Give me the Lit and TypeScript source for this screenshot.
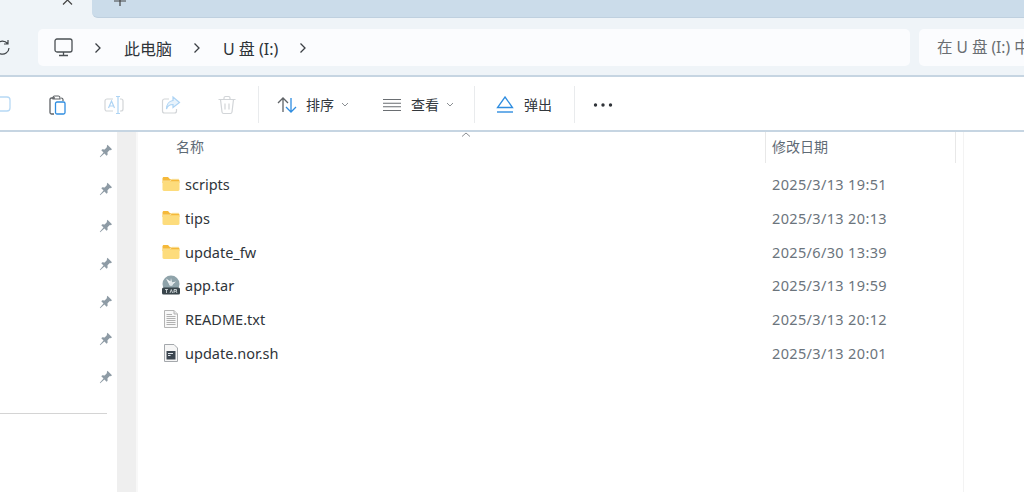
import { LitElement, html, css, svg } from "lit";
import { customElement } from "lit/decorators.js";

const folder = svg`<svg width="20" height="18" viewBox="0 0 20 18"><path d="M1.500 3.500C1.500 2.700 2.100 2 2.900 2H7l2 2.200h8c.8 0 1.400.6 1.400 1.400V8H1.500z" fill="#f5b93a"/><path d="M1.500 6.200h17v8.400c0 .8-.6 1.400-1.400 1.400H2.900C2.100 16 1.500 15.400 1.500 14.600z" fill="#fddc7c"/><path d="M1.500 6h7.500l2-1.800h7" fill="none" stroke="#fbeab0" stroke-width=".8"/></svg>`;
const tar = svg`<svg width="20" height="20" viewBox="0 0 20 20"><circle cx="10" cy="9" r="8.500" fill="#8fa3aa"/><path d="M5 3.500 9.500 6.500 10 3l1 4.500 4-1-4 3.500H8.500z" fill="#f4f7f8"/><circle cx="10" cy="9" r="2" fill="#dfe6e9"/><rect x="1" y="12.500" width="18" height="7" rx="1.500" fill="#39454b"/><path d="M4 14.500h3M5.500 14.500v3.500M9 18l1.300-3.500 1.300 3.500M13 18v-3.500h2.500v1.700H13M15 16.200l1 1.800" fill="none" stroke="#dfe6e9" stroke-width=".8"/></svg>`;
const txt = svg`<svg width="20" height="20" viewBox="0 0 20 20"><path d="M3.500 1.500h9.500l3.500 3.500v13.500h-13z" fill="#f8f8f8" stroke="#b4b4b4"/><path d="M13 1.500v3.500h3.500" fill="#e6e6e6" stroke="#b4b4b4"/><path d="M5.500 5.500h5.500M5.500 7.500h9M5.500 9.500h9M5.500 11.500h9M5.500 13.500h9M5.500 15.500h9" stroke="#b0b0b0"/></svg>`;
const sh = svg`<svg width="20" height="20" viewBox="0 0 20 20"><path d="M3.500 1.500h9.500l3.500 3.500v13.500h-13z" fill="#f6f6f6" stroke="#a4a8ac"/><rect x="5.500" y="8" width="9" height="8.500" fill="#3c4650"/><path d="M7 10.500h5M7 12.500h2.500" stroke="#dfe5ea"/></svg>`;
const pin = svg`<svg width="14" height="14" viewBox="0 0 14 14"><path d="M8.500.8 13 5.300l-1.200.9-1-.2-2.300 2.300.1 2.400-1 1-2.200-2.300L1.200 13.200.8 12.800l3.700-4.300L2.300 6.300l1-1 2.400.1L8 3.100l-.2-1z" fill="#8e9ba5"/></svg>`;
const chev = svg`<svg class="chev" width="8" height="12" viewBox="0 0 8 12"><path d="M1.500 1.500 6 6l-4.500 4.500" fill="none" stroke="#3a3f44" stroke-width="1.300"/></svg>`;
const caret = svg`<svg class="ic" width="8" height="5" viewBox="0 0 8 5"><path d="M1 1l3 3 3-3" fill="none" stroke="#8b8f93"/></svg>`;

const rows: [unknown, string, string][] = [
  [folder, "scripts", "2025/3/13 19:51"],
  [folder, "tips", "2025/3/13 20:13"],
  [folder, "update_fw", "2025/6/30 13:39"],
  [tar, "app.tar", "2025/3/13 19:59"],
  [txt, "README.txt", "2025/3/13 20:12"],
  [sh, "update.nor.sh", "2025/3/13 20:01"],
];

@customElement("app-root")
export class AppRoot extends LitElement {
  static styles = css`
    :host { display: block; width: 1024px; height: 492px; overflow: hidden; background: #fff;
      font-family: "Noto Sans", "Noto Sans CJK SC", sans-serif; color: #30363c; font-size: 14px; }
    .tabs { display: flex; height: 18px; background: #eff4f8; }
    .tab { width: 92px; display: flex; justify-content: flex-end; padding-right: 19px; box-sizing: border-box; }
    .strip { flex: 1; background: #cbdcea; border-bottom: 1px solid #bfd0df; border-bottom-left-radius: 6px; padding-left: 21px; }
    .tabs svg { display: block; }
    .addr { height: 59px; box-sizing: border-box; background: #eff4f8; border-bottom: 2px solid #c6d5e2; display: flex; align-items: center; padding-top: 2px; }
    .refresh { width: 10px; margin-right: 28px; overflow: hidden; display: flex; justify-content: flex-end; }
    .crumbs { width: 872px; height: 37px; background: #fbfcfe; border-radius: 5px; display: flex; align-items: center; padding-left: 16px; box-sizing: border-box; font-size: 16px; color: #2e3338; }
    .crumbs .pc { margin-right: 21px; }
    .crumbs .chev { margin-right: 22px; }
    .crumbs span { margin-right: 21px; white-space: nowrap; }
    .search { margin-left: 9px; flex: 1; height: 37px; background: #fbfcfe; border-radius: 5px 0 0 5px; padding-left: 18px; line-height: 37px; color: #6a6e72; font-size: 15.500px; white-space: nowrap; overflow: hidden; }
    .toolbar { height: 55px; box-sizing: border-box; padding-top: 2px; border-bottom: 2px solid #c6d5e2; display: flex; align-items: center; background: #fff; font-size: 14px; color: #33383d; }
    .toolbar .lbl { margin-bottom: 2px; }
    .ic { display: block; flex: none; }
    .sep { width: 1px; height: 37px; background: #e9ebed; flex: none; }
    .m-first { margin-left: -8px; }
    .main { display: flex; height: 360px; }
    .side { width: 117px; flex: none; box-sizing: border-box; padding: 12px 4px 0 0; display: flex; flex-direction: column; align-items: flex-end; }
    .pin { height: 37.700px; display: flex; align-items: flex-start; flex: none; }
    .rule { align-self: stretch; height: 1px; background: #d4d4d4; margin: 5px 6px 0 0; flex: none; }
    .track { width: 19px; flex: none; background: #efefef; }
    .gap { width: 2px; flex: none; background: #f8f8f8; }
    .list { width: 825px; flex: none; border-right: 1px solid #f3f3f3; position: relative; }
    .head { height: 31px; display: flex; color: #5f6b76; font-size: 14px; line-height: 30px; position: relative; }
    .head .n { width: 628px; padding-left: 38px; box-sizing: border-box; border-right: 1px solid #e8e8e8; }
    .head .d { width: 190px; padding-left: 6px; box-sizing: border-box; border-right: 1px solid #e8e8e8; }
    .sort { position: absolute; left: 323px; top: 0; display: block; }
    .rows { padding-top: 4.500px; }
    .row { height: 33.700px; display: flex; align-items: center; padding-left: 23px; }
    .row svg { flex: none; margin-right: 4px; }
    .row .name { width: 587px; font-size: 14.500px; color: #2f353a; }
    .row .date { font-size: 14.500px; letter-spacing: 0.35px; color: #6b747c; white-space: nowrap; }
  `;

  render() {
    const ml = (n: number) => `margin-left:${n}px`;
    return html`
      <div class="tabs">
        <div class="tab"><svg width="11" height="5" viewBox="0 0 11 5"><path d="M1 4.500 5.500 0l4.500 4.500" fill="none" stroke="#444" stroke-width="1.200"/></svg></div>
        <div class="strip"><svg width="14" height="6" viewBox="0 0 14 6"><path d="M1 1h12M7 0v6" fill="none" stroke="#444" stroke-width="1.200"/></svg></div>
      </div>
      <div class="addr">
        <div class="refresh"><svg class="ic" width="16" height="18" viewBox="0 0 16 18" style="flex:none"><path d="M13.500 4.500A6.500 6.500 0 1 0 15 9M14 1v4h-4" fill="none" stroke="#3f4448" stroke-width="1.200"/></svg></div>
        <div class="crumbs">
          <svg class="ic pc" width="19" height="19" viewBox="0 0 19 19"><rect x="1" y="1" width="17" height="13" rx="2" fill="none" stroke="#4b5054" stroke-width="1.300"/><path d="M9.500 14v3M5 17.500h9" stroke="#4b5054" stroke-width="1.300"/></svg>
          ${chev}<span>此电脑</span>${chev}<span>U 盘 (I:)</span>${chev}
        </div>
        <div class="search">在 U 盘 (I:) 中</div>
      </div>
      <div class="toolbar">
        <svg class="ic m-first" width="20" height="20" viewBox="0 0 20 20"><rect x="3" y="2" width="15" height="14" rx="3" fill="none" stroke="#b7d9f5" stroke-width="1.300"/></svg>
        <svg class="ic" style=${ml(35)} width="20" height="20" viewBox="0 0 20 20"><path d="M8 3H4.500C3.500 3 3 3.600 3 4.500v13c0 .9.500 1.500 1.500 1.500H7" fill="none" stroke="#5f6367" stroke-width="1.300"/><path d="M6 3c0-1 .7-2 1.500-2h4C12.300 1 13 2 13 3v1H6z" fill="none" stroke="#5f6367" stroke-width="1.200"/><path d="M14 3c1 0 2 .5 2 1.500V6" fill="none" stroke="#5f6367" stroke-width="1.200"/><rect x="8.500" y="7" width="9.500" height="12" rx="1.500" fill="none" stroke="#2f8de0" stroke-width="1.300"/></svg>
        <svg class="ic" style=${ml(37)} width="20" height="20" viewBox="0 0 20 20"><path d="M9 4H3C2 4 1 5 1 6v8c0 1 1 2 1.500 2H9M16 4h1c1 0 2 1 2 2v8c0 1-1 2-2 2h-1" fill="none" stroke="#d2d5d8" stroke-width="1.200"/><path d="M4.500 13 7.500 6l3 7M5.500 11h4" fill="none" stroke="#aed4f4" stroke-width="1.200"/><path d="M12 1.500h4M14 1.500v17M12 18.500h4" fill="none" stroke="#aed4f4" stroke-width="1.200"/></svg>
        <svg class="ic" style=${ml(37)} width="20" height="20" viewBox="0 0 20 20"><path d="M8 4H3.500C2.500 4 1.500 5 1.500 6v10c0 1 1 2 2 2h10c1 0 2-1 2-2v-2" fill="none" stroke="#d2d5d8" stroke-width="1.200"/><path d="M12 2l6.500 5.500-6.500 5V9.500C9 9.500 6.500 11 5.500 14 5.500 9.500 8 6 12 5.500z" fill="#e8f3fc" stroke="#aed4f4" stroke-width="1.200"/></svg>
        <svg class="ic" style=${ml(36)} width="20" height="20" viewBox="0 0 20 20"><path d="M1.500 4.500h17M7 4.500V3c0-1 .6-1.500 1.500-1.500h3c.9 0 1.500.5 1.500 1.500v1.500M3.500 4.500 5 17c.1 1 .8 1.500 1.700 1.500h6.600c.9 0 1.600-.5 1.700-1.500l1.500-12.500M8 8.500v6M12 8.500v6" fill="none" stroke="#d2d5d8" stroke-width="1.200"/></svg>
        <div class="sep" style=${ml(21)}></div>
        <svg class="ic" style=${ml(18)} width="20" height="18" viewBox="0 0 20 18"><path d="M6 16V2M1 7l5-5 5 5" fill="none" stroke="#5f6367" stroke-width="1.300"/><path d="M14 2v14M9 11l5 5 5-5" fill="none" stroke="#2f8de0" stroke-width="1.300"/></svg>
        <span class="lbl" style=${ml(9)}>排序</span>
        <span style=${ml(7)}>${caret}</span>
        <svg class="ic" style=${ml(33)} width="20" height="14" viewBox="0 0 20 14"><path d="M1 1.500h18M1 5.200h18M1 8.800h18M1 12.500h18" stroke="#6a6e72" stroke-width="1.100"/></svg>
        <span class="lbl" style=${ml(9)}>查看</span>
        <span style=${ml(7)}>${caret}</span>
        <div class="sep" style=${ml(20)}></div>
        <svg class="ic" style=${ml(21)} width="18" height="18" viewBox="0 0 18 18"><path d="M9 1 16.500 11.500h-15z" fill="none" stroke="#2f8de0" stroke-width="1.300"/><path d="M1 16h16" stroke="#2f8de0" stroke-width="1.400"/></svg>
        <span class="lbl" style=${ml(10)}>弹出</span>
        <div class="sep" style=${ml(22)}></div>
        <svg class="ic" style=${ml(18)} width="20" height="6" viewBox="0 0 20 6"><circle cx="2.500" cy="3" r="1.700" fill="#2f3338"/><circle cx="10" cy="3" r="1.700" fill="#2f3338"/><circle cx="17.500" cy="3" r="1.700" fill="#2f3338"/></svg>
      </div>
      <div class="main">
        <div class="side">
          ${[0, 1, 2, 3, 4, 5, 6].map(() => html`<div class="pin">${pin}</div>`)}
          <div class="rule"></div>
        </div>
        <div class="track"></div>
        <div class="gap"></div>
        <div class="list">
          <div class="head">
            <div class="n">名称</div><div class="d">修改日期</div>
            <svg class="sort" width="10" height="5" viewBox="0 0 10 5"><path d="M1 4.500 5 1l4 3.500" fill="none" stroke="#8b8f93"/></svg>
          </div>
          <div class="rows">
            ${rows.map(([ic, n, d]) => html`<div class="row">${ic}<div class="name">${n}</div><div class="date">${d}</div></div>`)}
          </div>
        </div>
      </div>
    `;
  }
}
